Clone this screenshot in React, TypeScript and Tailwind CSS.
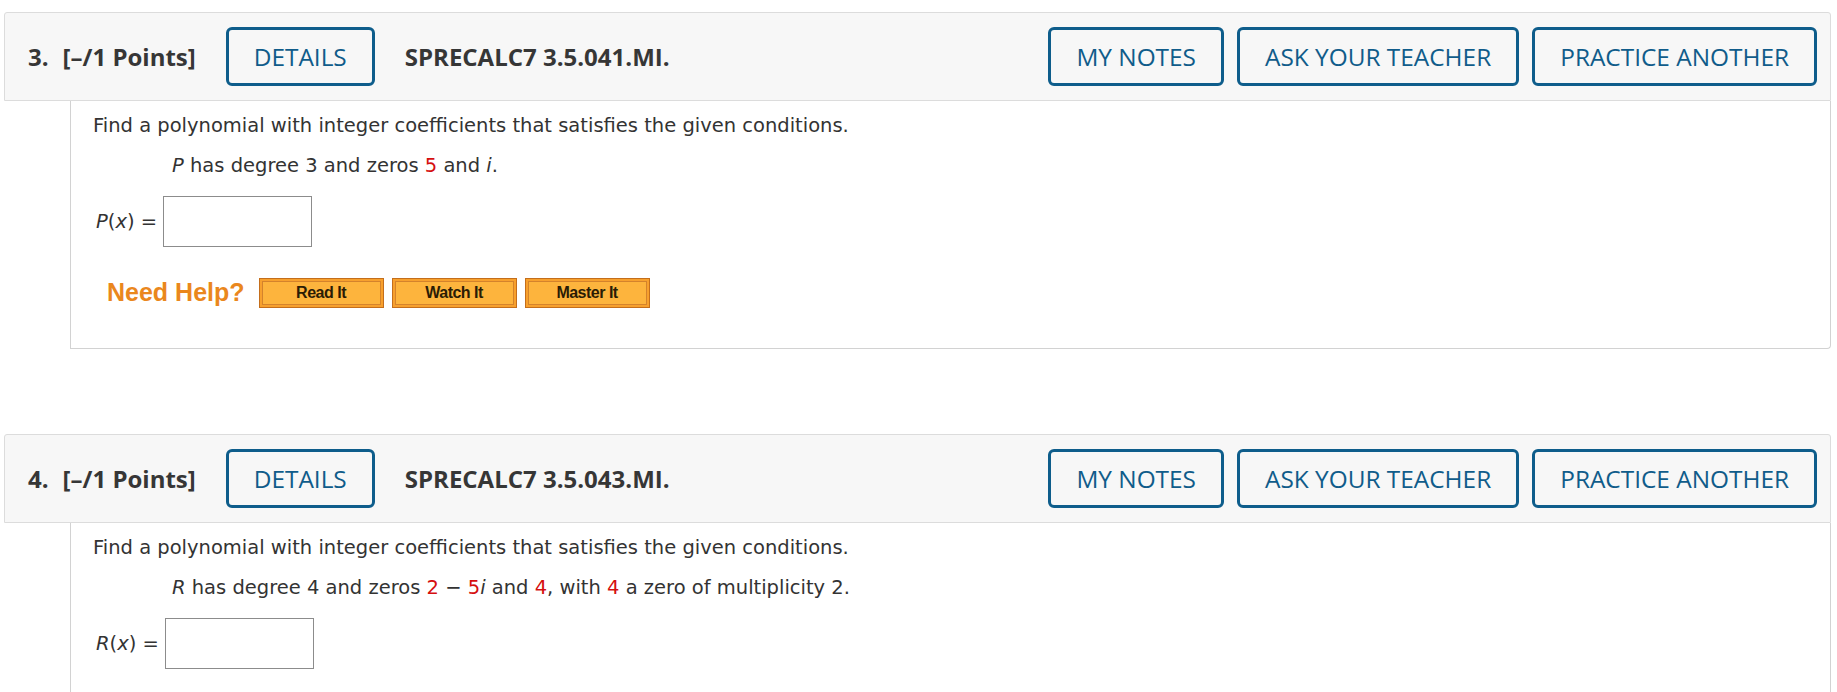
import React from "react";

const headerFont = { fontFamily: '"Open Sans", "DejaVu Sans", sans-serif' };
const bodyFont = { fontFamily: '"DejaVu Sans", Verdana, sans-serif' };
const arialFont = { fontFamily: '"Liberation Sans", Arial, sans-serif' };

function BlueButton({ children }: { children: React.ReactNode }) {
  return (
    <div
      className="h-[59px] px-[25px] pt-[1px] flex items-center border-[3px] border-[#0e5d8b] rounded-[6px] text-[24.4px] font-medium text-[#105c8a] uppercase whitespace-nowrap bg-[#f7f7f7]"
      style={headerFont}
    >
      {children}
    </div>
  );
}

function HelpButton({ children }: { children: React.ReactNode }) {
  return (
    <div className="w-[125px] h-[30px] border border-[#c46e1b] bg-[#f7a02d] p-[2px]">
      <div
        className="w-full h-full border border-[#d4832c] bg-[#fdb43d] flex items-center justify-center text-[16px] font-bold text-[#2b1c05] tracking-[-0.5px]"
        style={arialFont}
      >
        {children}
      </div>
    </div>
  );
}

function Red({ children }: { children: React.ReactNode }) {
  return <span className="text-[#d50f0f]">{children}</span>;
}

function Header({ num, code }: { num: string; code: string }) {
  return (
    <div
      className="h-[89px] border border-[#dcdcdc] bg-[#f7f7f7] rounded-t-[3px] flex items-center pl-[23px] pr-[13px] text-[#363636]"
      style={headerFont}
    >
      <span className="text-[24px] font-bold">{num}.</span>
      <span className="text-[24px] font-bold ml-[14px]">[–/1 Points]</span>
      <div className="ml-[30px]">
        <BlueButton>Details</BlueButton>
      </div>
      <span className="text-[24px] font-bold ml-[30px]">{code}</span>
      <div className="ml-auto flex gap-[13px]">
        <BlueButton>My Notes</BlueButton>
        <BlueButton>Ask Your Teacher</BlueButton>
        <BlueButton>Practice Another</BlueButton>
      </div>
    </div>
  );
}

function Question({
  num,
  code,
  condition,
  fn,
}: {
  num: string;
  code: string;
  condition: React.ReactNode;
  fn: string;
}) {
  return (
    <div>
      <Header num={num} code={code} />
      <div
        className="ml-[66px] border-x border-b border-[#d2d2d2] rounded-br-[4px] pl-[22px] pt-[13px] pb-[40px] text-[19.5px] text-[#333333] bg-white"
        style={bodyFont}
      >
        <div className="leading-[24px] h-[24px]">
          Find a polynomial with integer coefficients that satisfies the given conditions.
        </div>
        <div className="leading-[24px] h-[24px] mt-[16px] ml-[79px]">{condition}</div>
        <div className="flex items-center mt-[18px] ml-[3px] h-[51px]">
          <span>
            <i>{fn}</i>(<i>x</i>) =
          </span>
          <div className="ml-[6px] w-[149px] h-[51px] border border-[#8c8c8c] bg-white"></div>
        </div>
        <div className="flex items-center mt-[31px] ml-[14px] h-[30px]">
          <span
            className="text-[25px] font-bold text-[#ea871d] mr-[14px]"
            style={arialFont}
          >
            Need Help?
          </span>
          <div className="flex gap-[8px]">
            <HelpButton>Read It</HelpButton>
            <HelpButton>Watch It</HelpButton>
            <HelpButton>Master It</HelpButton>
          </div>
        </div>
      </div>
    </div>
  );
}

export default function App() {
  return (
    <div className="w-[1837px] min-h-[692px] bg-white pt-[12px] pl-[4px] pr-[6px]">
      <Question
        num="3"
        code="SPRECALC7 3.5.041.MI."
        fn="P"
        condition={
          <>
            <i>P</i> has degree 3 and zeros <Red>5</Red> and <i>i</i>.
          </>
        }
      />
      <div className="h-[85px]"></div>
      <Question
        num="4"
        code="SPRECALC7 3.5.043.MI."
        fn="R"
        condition={
          <>
            <i>R</i> has degree 4 and zeros <Red>2</Red> − <Red>5</Red>
            <i>i</i> and <Red>4</Red>, with <Red>4</Red> a zero of multiplicity 2.
          </>
        }
      />
    </div>
  );
}
